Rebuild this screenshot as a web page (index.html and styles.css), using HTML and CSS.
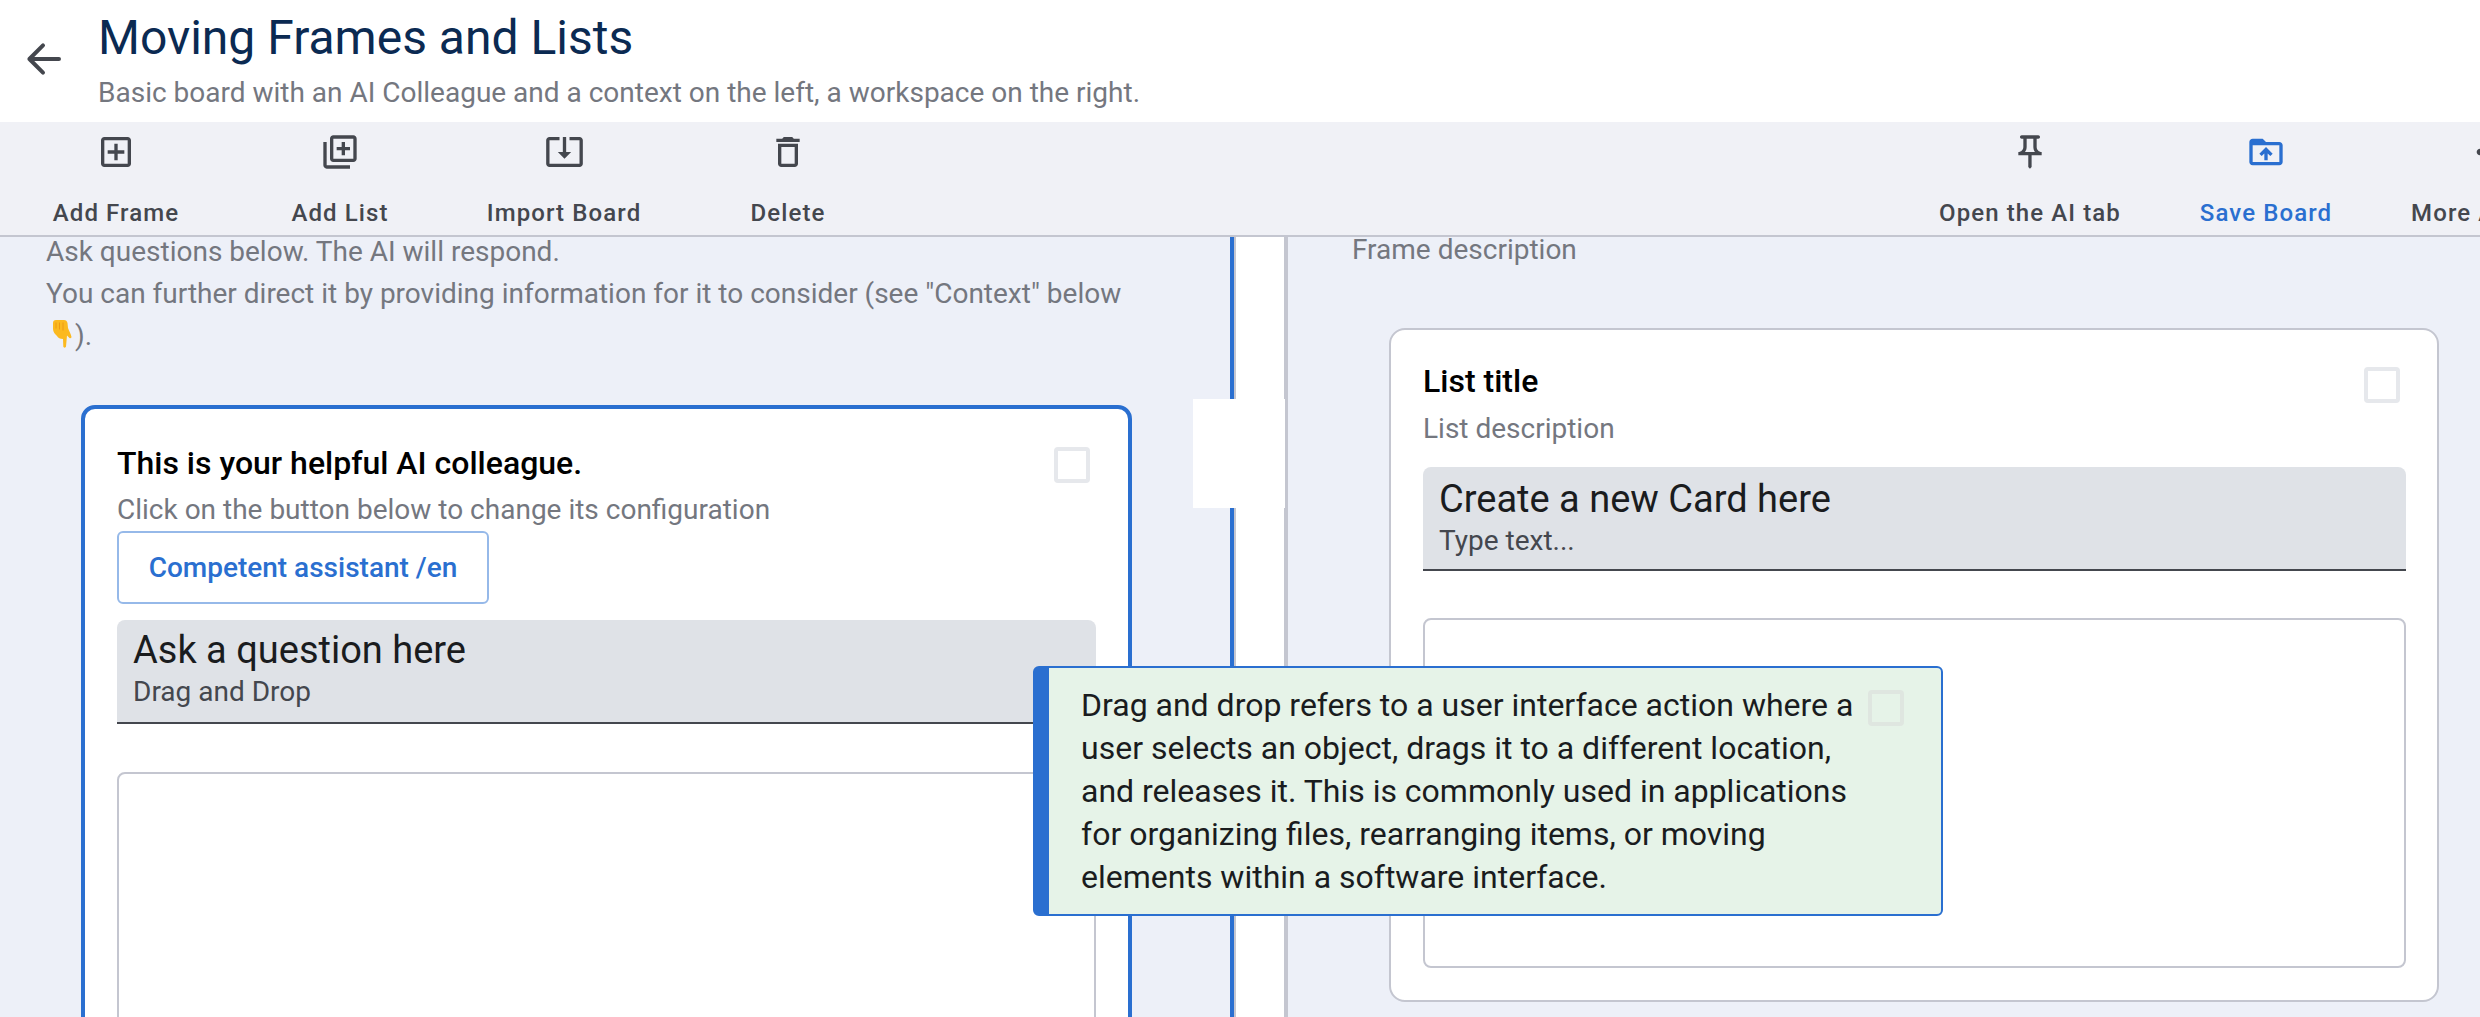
FILE: index.html
```html
<!DOCTYPE html>
<html lang="en">
<head>
<meta charset="UTF-8" />
<meta name="viewport" content="width=device-width, initial-scale=1" />
<title>Moving Frames and Lists</title>
<link rel="stylesheet" href="styles.css">
</head>
<body>

<header class="top-bar">
  <button class="back-btn" aria-label="Back">
    <svg viewBox="0 0 24 24" class="back-icon"><path d="M19.500 12H4.700M11.500 5.200L4.700 12l6.800 6.800"/></svg>
  </button>
  <div class="top-text">
    <h1 class="board-title">Moving Frames and Lists</h1>
    <p class="board-desc">Basic board with an AI Colleague and a context on the left, a workspace on the right.</p>
  </div>
</header>

<nav class="toolbar">
  <div class="tool">
    <svg viewBox="0 0 24 24"><path d="M19 3H5c-1.100 0-2 .9-2 2v14c0 1.100.9 2 2 2h14c1.100 0 2-.9 2-2V5c0-1.100-.9-2-2-2zm0 16H5V5h14v14zm-8-2h2v-4h4v-2h-4V7h-2v4H7v2h4z"/></svg>
    <span>Add Frame</span>
  </div>
  <div class="tool">
    <svg viewBox="0 0 24 24"><path d="M4 6H2v14c0 1.100.9 2 2 2h14v-2H4V6zm16-4H8c-1.100 0-2 .9-2 2v12c0 1.100.9 2 2 2h12c1.100 0 2-.9 2-2V4c0-1.100-.9-2-2-2zm0 14H8V4h12v12zm-7-2h2v-3h3V9h-3V6h-2v3h-3v2h3z"/></svg>
    <span>Add List</span>
  </div>
  <div class="tool">
    <svg class="wide-icon" viewBox="0 0 28 24"><path d="M23 3h-6v2h6v14H5V5h6V3H5C3.900 3 3 3.900 3 5v14c0 1.100.9 2 2 2h18c1.100 0 2-.9 2-2V5c0-1.100-.9-2-2-2zM13 3v9h-3l4 4 4-4h-3V3h-2z"/></svg>
    <span>Import Board</span>
  </div>
  <div class="tool">
    <svg viewBox="0 0 24 24"><path d="M6 19c0 1.100.9 2 2 2h8c1.100 0 2-.9 2-2V7H6v12zM8 9h8v10H8V9zm7.500-5l-1-1h-5l-1 1H5v2h14V4h-3.500z"/></svg>
    <span>Delete</span>
  </div>
  <div class="tool tool-pin">
    <svg viewBox="0 0 24 24"><path d="M14 4v5c0 1.120.37 2.160 1 3H9c.65-.86 1-1.900 1-3V4h4m3-2H7c-.55 0-1 .45-1 1s.45 1 1 1h1v5c0 1.660-1.340 3-3 3v2h5.970v7l1 1 1-1v-7H19v-2c-1.660 0-3-1.340-3-3V4h1c.55 0 1-.45 1-1s-.45-1-1-1z"/></svg>
    <span>Open the AI tab</span>
  </div>
  <div class="tool tool-save">
    <svg viewBox="0 0 24 24"><path d="M20 6h-8l-2-2H4c-1.100 0-2 .9-2 2v12c0 1.100.9 2 2 2h16c1.100 0 2-.9 2-2V8c0-1.100-.9-2-2-2zm0 12H4V8h16v10zM8 13.010l1.410 1.410L11 12.840V17h2v-4.160l1.590 1.590L16 13.010 12.010 9 8 13.010z"/></svg>
    <span>Save Board</span>
  </div>
  <div class="tool tool-more">
    <svg viewBox="0 0 24 24"><path d="M6 10c-1.100 0-2 .9-2 2s.9 2 2 2 2-.9 2-2-.9-2-2-2zm12 0c-1.100 0-2 .9-2 2s.9 2 2 2 2-.9 2-2-.9-2-2-2zm-6 0c-1.100 0-2 .9-2 2s.9 2 2 2 2-.9 2-2-.9-2-2-2z"/></svg>
    <span>More Actions</span>
  </div>
</nav>

<main class="workspace">
  <section class="pane-left">
    <p class="pane-text">Ask questions below. The AI will respond.</p>
    <p class="pane-text">You can further direct it by providing information for it to consider (see "Context" below
      <svg class="hand" viewBox="0 0 19 29"><path fill="#fbb91f" d="M3 1h8c2 0 3 1 3.500 3l.5 5c1 3 3 6 3.500 9 0 1-1 1.500-2 1l-2.500-2.500-1 11c-.2 1.500-2.500 1.500-2.700 0L10 20c-3 0-5-1-6-3-2-2-4-4-4-7V4c0-2 1-3 3-3z"/><path fill="none" stroke="#ee9a12" stroke-width="1" d="M10 3.500v8M6.500 3.500v7M3 3.500v6"/></svg>).</p>

    <article class="frame">
      <div class="card-head">
        <h2 class="card-title">This is your helpful AI colleague.</h2>
        <span class="check"></span>
      </div>
      <p class="card-desc">Click on the button below to change its configuration</p>
      <button class="config-btn">Competent assistant /en</button>
      <div class="input-box">
        <label class="input-label">Ask a question here</label>
        <div class="input-value">Drag and Drop</div>
      </div>
      <div class="drop-zone"></div>
    </article>
  </section>

  <div class="divider"></div>

  <section class="pane-right">
    <p class="frame-desc">Frame description</p>
    <article class="list">
      <div class="card-head">
        <h2 class="card-title">List title</h2>
        <span class="check"></span>
      </div>
      <p class="card-desc">List description</p>
      <div class="input-box">
        <label class="input-label">Create a new Card here</label>
        <div class="input-value">Type text...</div>
      </div>
      <div class="drop-zone"></div>
    </article>
  </section>

  <div class="divider-handle"></div>

  <!-- card being dragged, floats over both panes -->
  <div class="drag-card">
    <p>Drag and drop refers to a user interface action where a user selects an object, drags it to a different location, and releases it. This is commonly used in applications for organizing files, rearranging items, or moving elements within a software interface.</p>
    <span class="check"></span>
  </div>
</main>

</body>
</html>
```

FILE: styles.css
```css
* {
  box-sizing: border-box;
}
html, body {
  margin: 0;
  height: 100%;
  overflow: hidden;
}
body {
  font-family: Roboto, "Liberation Sans", sans-serif;
  background: #fff;
  color: #1a1c1e;
}
p, h1, h2 {
  margin: 0;
}
svg {
  fill: currentColor;
  display: block;
}

.top-bar {
  height: 122px;
  display: flex;
  background: #fff;
}
.back-btn {
  width: 98px;
  flex: none;
  padding: 35px 0 0 20px;
  border: none;
  background: none;
  color: #44474e;
  display: flex;
  align-items: flex-start;
}
.back-icon {
  width: 48px;
  height: 48px;
  fill: none;
  stroke: currentColor;
  stroke-width: 2;
  stroke-linecap: round;
  stroke-linejoin: round;
}
.board-title {
  font-size: 48px;
  font-weight: 400;
  line-height: 54px;
  color: #0b2a52;
  margin-top: 11px;
}
.board-desc {
  font-size: 28px;
  line-height: 34px;
  margin-top: 11px;
  color: #74777f;
}

.toolbar {
  height: 115px;
  padding-left: 4px;
  background: #f0f1f6;
  border-bottom: 2px solid #c4c6d0;
  display: flex;
  overflow: hidden;
  color: #44474e;
}
.tool {
  width: 224px;
  display: flex;
  flex-direction: column;
  align-items: center;
  flex: none;
  font-size: 24px;
  font-weight: 500;
  letter-spacing: 1.1px;
  padding-top: 10px;
  white-space: nowrap;
}
.tool svg {
  width: 40px;
  height: 40px;
}
.tool .wide-icon {
  width: 47px;
}
.tool span {
  margin-top: 26px;
  line-height: 30px;
}
.tool-pin {
  width: 260px;
  margin-left: 1000px;
}
.tool-save {
  width: 212px;
  color: #2a6fd0;
}
.tool-more {
  width: 240px;
  padding-left: 41px;
  padding-right: 46px;
}

.workspace {
  position: relative;
  height: 780px;
  display: flex;
  background: #fff;
  overflow: hidden;
}
.pane-left {
  width: 1234px;
  flex: none;
  background: #edf0f8;
  border-right: 4px solid #2a6fd0;
  padding-left: 46px;
}
.pane-text {
  position: relative;
  top: -6px;
  font-size: 28px;
  line-height: 42px;
  color: #74777f;
  max-width: 1090px;
}
.hand {
  display: inline-block;
  width: 19px;
  height: 29px;
  margin: 0 3px 0 7px;
  vertical-align: -3px;
}
.divider {
  width: 54px;
  flex: none;
  background: #fff;
  border-left: 2px solid #c4c6d0;
  border-right: 4px solid #c4c6d0;
}
.divider-handle {
  position: absolute;
  left: 1193px;
  top: 162px;
  width: 92px;
  height: 109px;
  background: #fff;
}
.pane-right {
  flex: 1;
  background: #edf0f8;
  padding-left: 64px;
}
.frame-desc {
  height: 91px;
  font-size: 28px;
  line-height: 26px;
  color: #74777f;
}

.frame {
  width: 1051px;
  height: 700px;
  margin: 42px 0 0 35px;
  padding: 36px 32px;
  background: #fff;
  border: 4px solid #2a6fd0;
  border-radius: 14px;
}
.list {
  width: 1050px;
  height: 674px;
  margin-left: 37px;
  padding: 33px 31px 33px 32px;
  background: #fff;
  border: 2px solid #c4c6d0;
  border-radius: 16px;
}
.card-head {
  display: flex;
  justify-content: space-between;
  align-items: flex-start;
}
.card-title {
  font-size: 32px;
  font-weight: 500;
  line-height: 36px;
  color: #000;
}
.check {
  display: block;
  width: 36px;
  height: 36px;
  margin: 2px 6px 0 0;
  border: 4px solid #e6e8ec;
  border-radius: 4px;
  flex: none;
}
.list .check {
  margin: 4px 6px 0 0;
}
.card-desc {
  font-size: 28px;
  line-height: 34px;
  color: #74777f;
  margin-top: 10px;
}
.list .card-desc {
  margin-top: 9px;
}
.config-btn {
  display: block;
  width: 372px;
  height: 73px;
  margin-top: 4px;
  font: 500 28px Roboto, sans-serif;
  color: #2a6fd0;
  background: #fff;
  border: 2px solid #96b9e9;
  border-radius: 6px;
}
.input-box {
  height: 104px;
  margin-top: 16px;
  padding: 8px 16px 0;
  background: #dfe2e7;
  border-bottom: 2px solid #44474e;
  border-radius: 8px 8px 0 0;
}
.list .input-box {
  margin-top: 21px;
  padding-top: 10px;
}
.input-label {
  display: block;
  font-size: 38px;
  line-height: 44px;
  color: #1a1c1e;
}
.input-value {
  margin-top: 4px;
  font-size: 28px;
  line-height: 32px;
  color: #44474e;
}
.drop-zone {
  height: 400px;
  margin-top: 48px;
  border: 2px solid #c4c6d0;
  border-radius: 8px;
}
.list .drop-zone {
  height: 350px;
  margin-top: 47px;
}

.drag-card {
  position: absolute;
  left: 1033px;
  top: 429px;
  width: 910px;
  height: 250px;
  display: flex;
  padding: 16px 37px 0 32px;
  background: #e6f3e8;
  border: 2px solid #2a6fd0;
  border-left-width: 16px;
  border-radius: 6px;
}
.drag-card p {
  flex: 1;
  font-size: 32px;
  line-height: 43px;
  color: #1a1c1e;
}
.drag-card .check {
  margin: 6px 0 0 0;
  border-color: #dfe6e0;
}
```
